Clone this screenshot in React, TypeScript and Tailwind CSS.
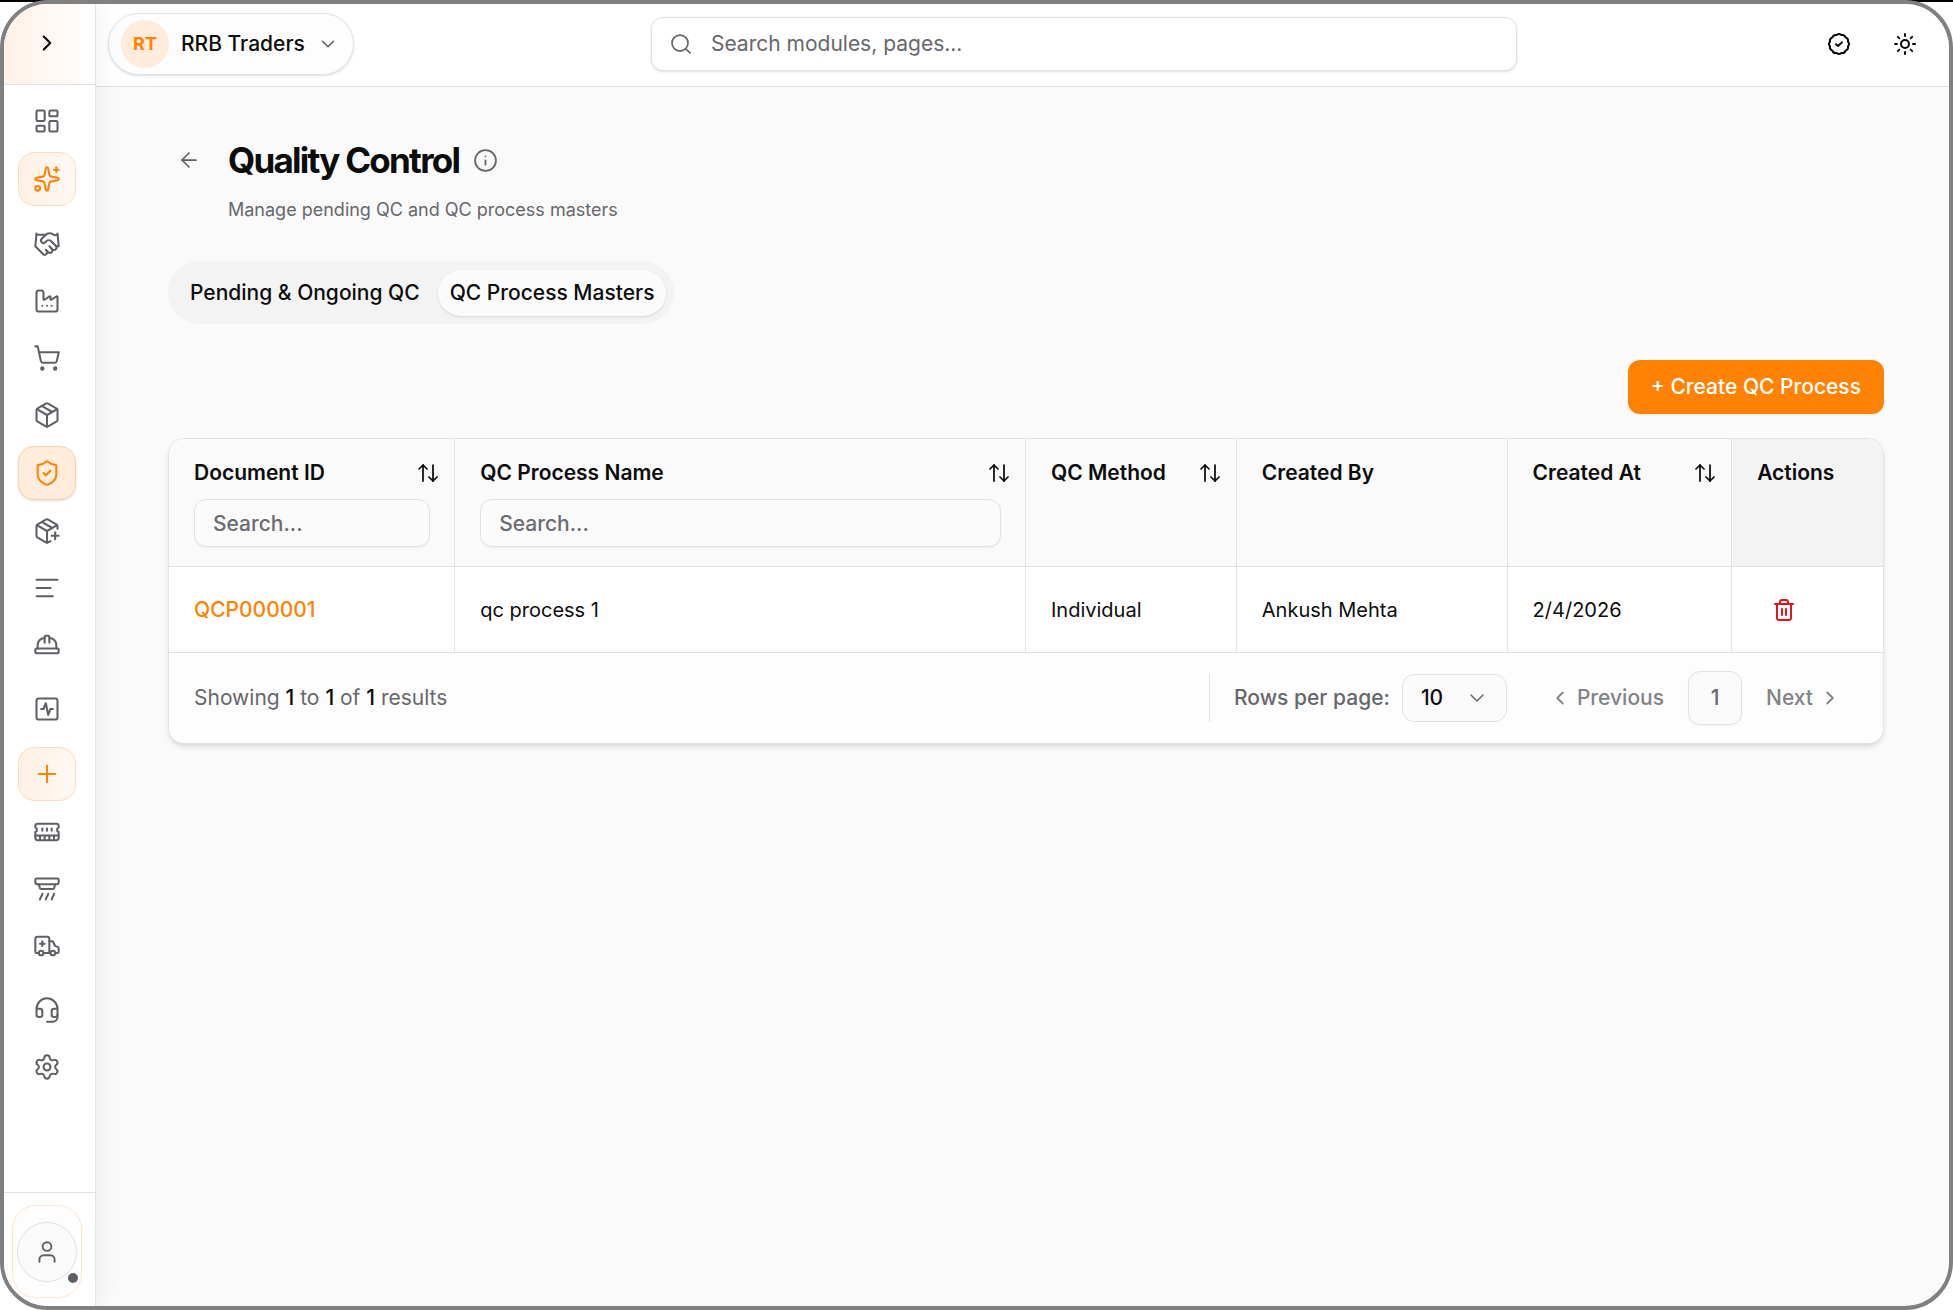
import React from "react";
import {
  AlarmSmoke, Ambulance, ArrowLeft, ArrowUpDown, ChevronDown, ChevronLeft, ChevronRight,
  Factory, Handshake, HardHat, Headset, Info, LayoutDashboard, Package, PackagePlus, Plus,
  Search, Settings, ShieldCheck, ShoppingCart, Sparkles, SquareActivity, Sun, TextAlignStart, Trash2, User,
} from "lucide-react";

type IconProps = { size?: number; strokeWidth?: number };
type NavItem = { label: string; icon: React.ComponentType<IconProps>; tone?: "soft" | "active" };

function MemoryModule({ size = 24, strokeWidth = 2 }: IconProps) {
  return (
    <svg width={size} height={size} viewBox="0 0 24 24" fill="none" stroke="currentColor" strokeWidth={strokeWidth} strokeLinecap="round" strokeLinejoin="round" aria-hidden="true">
      <path d="M6 19v-3M10 19v-3M14 19v-3M18 19v-3M8 11V9M16 11V9M12 11V9M2 15h20" />
      <path d="M2 7a2 2 0 0 1 2-2h16a2 2 0 0 1 2 2v1.1a2 2 0 0 0 0 3.837V17a2 2 0 0 1-2 2H4a2 2 0 0 1-2-2v-5.1a2 2 0 0 0 0-3.837Z" />
    </svg>
  );
}

// Outline of a round seal with twelve shallow lobes, centred in a 24-unit box.
function sealOutline() {
  const point = (deg: number, r: number) => {
    const a = (deg * Math.PI) / 180;
    return (12 + r * Math.sin(a)).toFixed(2) + " " + (12 - r * Math.cos(a)).toFixed(2);
  };
  let d = "M" + point(-15, 9.3);
  for (let k = 0; k < 12; k++) d += "Q" + point(k * 30, 11.1) + " " + point(k * 30 + 15, 9.3);
  return d + "Z";
}

function SealCheck() {
  return (
    <svg width={24} height={24} viewBox="0 0 24 24" fill="none" stroke="currentColor" strokeWidth={2} strokeLinecap="round" strokeLinejoin="round" aria-hidden="true">
      <path d={sealOutline()} />
      <path d="m9 12.2 2 1.8 4-3.8" />
    </svg>
  );
}

const navGroups: NavItem[][] = [
  [
    { label: "Dashboard", icon: LayoutDashboard },
    { label: "Assistant", icon: Sparkles, tone: "soft" },
  ],
  [
    { label: "Partners", icon: Handshake },
    { label: "Production", icon: Factory },
    { label: "Purchases", icon: ShoppingCart },
    { label: "Inventory", icon: Package },
    { label: "Quality Control", icon: ShieldCheck, tone: "active" },
    { label: "Stock entry", icon: PackagePlus },
    { label: "Logs", icon: TextAlignStart },
    { label: "Workforce", icon: HardHat },
  ],
  [{ label: "Activity", icon: SquareActivity }],
  [
    { label: "Add", icon: Plus, tone: "soft" },
    { label: "Memory", icon: MemoryModule },
    { label: "Alarms", icon: AlarmSmoke },
    { label: "Dispatch", icon: Ambulance },
  ],
  [
    { label: "Support", icon: Headset },
    { label: "Settings", icon: Settings },
  ],
];

const tones = {
  plain: "text-[#5f6066]",
  soft: "my-px border border-[#ffdcb8] bg-linear-to-r from-[#fff0e3] to-[#fff9f4] text-[#ff8204]",
  active: "my-px border border-[#ffd3a6] bg-[#ffecdb] text-[#ff8204] shadow-sm",
};

function Sidebar() {
  return (
    <aside className="z-10 flex w-[92px] shrink-0 flex-col border-r border-[#e2e2e3] bg-white shadow-[4px_0_24px_rgba(0,0,0,0.06)]">
      <div className="flex h-[81px] items-center justify-center border-b border-[#e2e2e3] bg-linear-to-r from-[#fff1e7] to-white pr-[5px] pb-[3px]">
        <button aria-label="Expand sidebar" className="p-2">
          <ChevronRight size={26} />
        </button>
      </div>
      <nav aria-label="Main" className="flex flex-1 flex-col items-center gap-2.5 pt-[9px] pr-[5px]">
        {navGroups.map((group, i) => (
          <div key={i} className="flex flex-col gap-[3px]">
            {group.map(({ label, icon: Icon, tone }) => (
              <button
                key={label}
                aria-label={label}
                className={"flex h-[54px] w-[58px] items-center justify-center rounded-2xl " + tones[tone ?? "plain"]}
              >
                <Icon size={28} strokeWidth={1.75} />
              </button>
            ))}
          </div>
        ))}
      </nav>
      <div className="border-t border-[#e2e2e3] pt-3 pr-[13px] pb-2 pl-2">
        <button aria-label="Account" className="flex h-[93px] w-full items-center justify-center rounded-3xl border border-[#ffe4cc] bg-[#fdfdfd]">
          <span className="relative flex size-[60px] items-center justify-center rounded-full border border-[#e0e0e1] bg-[#fafafa] text-[#5f6066]">
            <User size={26} strokeWidth={1.75} />
            <span className="absolute -right-1 -bottom-1 size-3.5 rounded-full border-2 border-white bg-[#5f6066]" />
          </span>
        </button>
      </div>
    </aside>
  );
}

function Header() {
  return (
    <header className="flex h-[83px] shrink-0 items-center border-b border-[#e2e2e3] bg-white pr-8 pb-0.5 pl-3">
      <div className="flex flex-[19]">
        <button className="flex h-[62px] items-center rounded-full border border-[#e2e2e3] bg-[#fdfdfd] pr-3.5 pl-3 shadow-sm">
          <span className="flex size-12 items-center justify-center rounded-full bg-[#ffecdd] text-lg font-bold text-[#ff8204]">RT</span>
          <span className="ml-3 text-[21px] font-medium">RRB Traders</span>
          <ChevronDown size={22} strokeWidth={1.75} className="ml-3 text-[#5f6066]" />
        </button>
      </div>
      <label className="flex h-[54px] w-[866px] items-center gap-[18px] rounded-xl border border-[#e2e2e3] bg-white px-[17px] text-[#66676c] shadow-sm">
        <Search size={24} strokeWidth={1.75} />
        <input aria-label="Search modules, pages" placeholder="Search modules, pages..." className="min-w-0 flex-1 bg-transparent text-[21px] outline-none placeholder:text-[#66676c]" />
      </label>
      <div className="flex flex-[14] justify-end gap-[42px]">
        <button aria-label="Approvals"><SealCheck /></button>
        <button aria-label="Toggle theme"><Sun size={24} /></button>
      </div>
    </header>
  );
}

const columns = [
  { name: "Document ID", width: "w-[16.7%]", sort: true, filter: true },
  { name: "QC Process Name", width: "w-[33.3%]", sort: true, filter: true },
  { name: "QC Method", width: "w-[12.3%]", sort: true },
  { name: "Created By", width: "w-[15.8%]" },
  { name: "Created At", width: "w-[13.1%]", sort: true },
  { name: "Actions", width: "w-[8.8%]" },
];

function ProcessTable() {
  const cell = "h-[85px] border-r border-[#e2e2e3] pl-[25px] pr-6 last:border-r-0";
  return (
    <section className="overflow-hidden rounded-2xl border border-[#e2e2e3] bg-white shadow-md">
      <table className="w-full table-fixed border-separate border-spacing-0 text-left text-[21px]">
        <thead>
          <tr>
            {columns.map((c) => (
              <th key={c.name} scope="col" className={c.width + " h-[128px] border-r border-b border-[#e2e2e3] bg-[#fafafa] pr-6 pl-[25px] pt-5 align-top font-semibold last:border-r-0 last:bg-[#f3f3f3]"}>
                <div className="flex h-7 items-center justify-between whitespace-nowrap">
                  {c.name}
                  {c.sort && (
                    <button aria-label={"Sort by " + c.name} className="-mr-2.5">
                      <ArrowUpDown size={24} strokeWidth={1.75} />
                    </button>
                  )}
                </div>
                {c.filter && (
                  <input
                    aria-label={"Filter " + c.name}
                    placeholder="Search..."
                    className="mt-3 h-12 w-full rounded-xl border border-[#e2e2e3] bg-[#fbfbfb] px-[18px] text-[21px] font-medium shadow-xs outline-none placeholder:text-[#6b6c71]"
                  />
                )}
              </th>
            ))}
          </tr>
        </thead>
        <tbody className="text-xl">
          <tr>
            <td className={cell}><a href="#QCP000001" className="text-[21px] font-medium text-[#ff8204]">QCP000001</a></td>
            <td className={cell}>qc process 1</td>
            <td className={cell}>Individual</td>
            <td className={cell}>Ankush Mehta</td>
            <td className={cell}>2/4/2026</td>
            <td className={cell}>
              <button aria-label="Delete QCP000001" className="ml-[15px] block text-[#e7131a]">
                <Trash2 size={24} />
              </button>
            </td>
          </tr>
        </tbody>
      </table>
      <footer className="flex h-[91px] items-center justify-between border-t border-[#e2e2e3] bg-[#fdfdfd] pr-[42px] pl-[25px] text-[21px] font-medium text-[#66676c]">
        <p className="font-normal">
          Showing <b className="font-medium text-[#0c0c0d]">1</b> to <b className="font-medium text-[#0c0c0d]">1</b> of{" "}
          <b className="font-medium text-[#0c0c0d]">1</b> results
        </p>
        <div className="flex items-center">
          <label className="flex h-12 items-center gap-3 border-l border-[#e2e2e3] pl-6">
            Rows per page:
            <span className="relative flex items-center">
              <select className="h-12 w-[105px] appearance-none rounded-xl border border-[#e2e2e3] bg-[#fafafa] pl-[18px] text-[#0c0c0d]">
                <option>10</option>
              </select>
              <ChevronDown size={24} strokeWidth={1.5} className="pointer-events-none absolute right-[18px]" />
            </span>
          </label>
          <button className="ml-[42px] flex items-center gap-1.5 text-[#828387]"><ChevronLeft size={22} />Previous</button>
          <button aria-current="page" className="ml-6 size-[54px] rounded-xl border border-[#e2e2e3] bg-[#fafafa] shadow-xs">1</button>
          <button className="ml-6 flex items-center gap-1.5 text-[#828387]">Next<ChevronRight size={22} /></button>
        </div>
      </footer>
    </section>
  );
}

export default function App() {
  return (
    <div className="h-screen bg-[linear-gradient(to_bottom,black_2px,white_2px)] font-['Inter',sans-serif] text-[#0c0c0d]">
      <div className="flex h-full overflow-hidden rounded-[48px] border-4 border-[#808080] bg-[#fafafa]">
        <Sidebar />
        <div className="flex min-w-0 flex-1 flex-col">
          <Header />
          <main className="flex-1 pt-[49px] pr-[65px] pl-[72px]">
            <div className="flex items-start gap-[27px] pl-[9px]">
              <button aria-label="Back" className="mt-3 text-[#5f6066]"><ArrowLeft size={24} strokeWidth={1.75} /></button>
              <div>
                <div className="flex items-center gap-3.5">
                  <h1 className="text-[35px] leading-[48px] font-bold tracking-tighter">Quality Control</h1>
                  <button aria-label="About quality control" className="text-[#66676c]"><Info size={25} strokeWidth={1.75} /></button>
                </div>
                <p className="mt-3 text-lg leading-7 text-[#66676c]">Manage pending QC and QC process masters</p>
              </div>
            </div>
            <div role="tablist" className="mt-[37px] inline-flex h-[63px] items-center gap-1 rounded-full bg-[#f3f3f3] px-2 text-[21px] font-medium">
              <button role="tab" aria-selected="false" className="h-[46px] rounded-full px-3.5">Pending &amp; Ongoing QC</button>
              <button role="tab" aria-selected="true" className="h-[46px] rounded-full bg-[#fbfbfb] px-3 shadow">QC Process Masters</button>
            </div>
            <div className="mt-9 mb-6 flex justify-end">
              <button className="h-[54px] rounded-xl bg-[#ff8204] px-[23px] text-[21px] font-medium text-white shadow-xs">+ Create QC Process</button>
            </div>
            <ProcessTable />
          </main>
        </div>
      </div>
    </div>
  );
}
